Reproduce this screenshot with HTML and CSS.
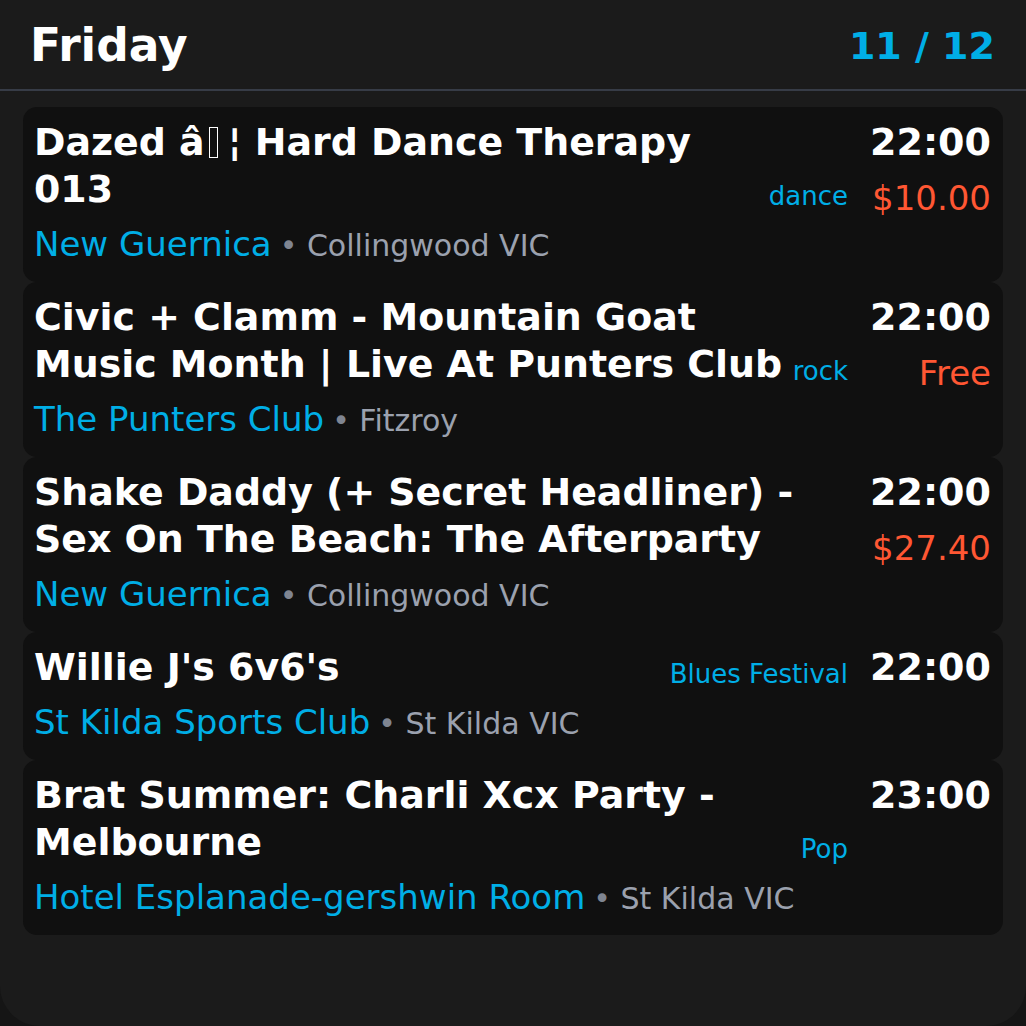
FILE: index.html
```html
<!DOCTYPE html>
<html lang="en">
<head>
<meta charset="utf-8">
<title>Friday</title>
<link rel="stylesheet" href="styles.css">
</head>
<body>
<div class="screen">
  <header class="header">
    <h1 class="day">Friday</h1>
    <div class="page">11 / 12</div>
  </header>
  <div class="list">
    <div class="card">
      <div class="main">
        <div class="top">
          <div class="title">Dazed â<span class="ctl"></span>¦ Hard Dance Therapy 013</div>
          <div class="genre">dance</div>
        </div>
        <div class="venue"><span class="vname">New Guernica</span><span class="loc"><span class="dot">•</span> Collingwood VIC</span></div>
      </div>
      <div class="side">
        <div class="time">22:00</div>
        <div class="price">$10.00</div>
      </div>
    </div>
    <div class="card">
      <div class="main">
        <div class="top">
          <div class="title">Civic + Clamm - Mountain Goat Music Month | Live At Punters Club</div>
          <div class="genre">rock</div>
        </div>
        <div class="venue"><span class="vname">The Punters Club</span><span class="loc"><span class="dot">•</span> Fitzroy</span></div>
      </div>
      <div class="side">
        <div class="time">22:00</div>
        <div class="price">Free</div>
      </div>
    </div>
    <div class="card">
      <div class="main">
        <div class="top">
          <div class="title">Shake Daddy (+ Secret Headliner) - Sex On The Beach: The Afterparty</div>
        </div>
        <div class="venue"><span class="vname">New Guernica</span><span class="loc"><span class="dot">•</span> Collingwood VIC</span></div>
      </div>
      <div class="side">
        <div class="time">22:00</div>
        <div class="price">$27.40</div>
      </div>
    </div>
    <div class="card">
      <div class="main">
        <div class="top">
          <div class="title">Willie J's 6v6's</div>
          <div class="genre">Blues Festival</div>
        </div>
        <div class="venue"><span class="vname">St Kilda Sports Club</span><span class="loc"><span class="dot">•</span> St Kilda VIC</span></div>
      </div>
      <div class="side">
        <div class="time">22:00</div>
      </div>
    </div>
    <div class="card">
      <div class="main">
        <div class="top">
          <div class="title">Brat Summer: Charli Xcx Party - Melbourne</div>
          <div class="genre">Pop</div>
        </div>
        <div class="venue"><span class="vname">Hotel Esplanade-gershwin Room</span><span class="loc"><span class="dot">•</span> St Kilda VIC</span></div>
      </div>
      <div class="side">
        <div class="time">23:00</div>
      </div>
    </div>
  </div>
</div>
</body>
</html>
```

FILE: styles.css
```css
html, body {
  margin: 0;
  padding: 0;
  background: #151515;
}
body {
  font-family: "DejaVu Sans", sans-serif;
  color: #ffffff;
}
.screen {
  width: 1026px;
  height: 1026px;
  box-sizing: border-box;
  background: #1b1b1b;
  border-radius: 0 0 40px 40px;
  overflow: hidden;
}
.header {
  display: flex;
  justify-content: space-between;
  align-items: center;
  padding: 0 31px 0 30px;
  border-bottom: 2px solid #373c47;
  box-sizing: border-box;
  height: 91px;
}
.day {
  margin: 0;
  font-size: 45.5px;
  font-weight: bold;
  line-height: 1;
  margin-top: 2px;
}
.page {
  font-size: 38px;
  font-weight: bold;
  color: #00aee6;
  line-height: 1;
  margin-top: 2px;
}
.list {
  display: flex;
  flex-direction: column;
  padding: 16px 23px 0 23px;
}
.card {
  display: flex;
  background: #101010;
  border-radius: 14px;
  padding: 12px 12px 15px 11px;
  gap: 22px;
}
.main {
  flex: 1;
  min-width: 0;
}
.top {
  display: flex;
  align-items: flex-end;
  gap: 8px;
}
.title {
  flex: 1;
  font-size: 37.9px;
  font-weight: bold;
  line-height: 47px;
}
.ctl {
  display: inline-block;
  box-sizing: border-box;
  width: 9px;
  height: 31px;
  border: 1.5px solid #ffffff;
  margin: 0 10px 0 4px;
  vertical-align: -3px;
}
.genre {
  font-size: 26px;
  color: #00aee6;
  line-height: 33px;
  white-space: nowrap;
}
.venue {
  margin-top: 10px;
  font-size: 34px;
  line-height: 42px;
}
.vname {
  color: #00aee6;
}
.loc {
  font-size: 30px;
  color: #9ba1ae;
}
.dot {
  color: #7f8591;
  margin-left: 8px;
}
.side {
  display: flex;
  flex-direction: column;
  align-items: flex-end;
}
.time {
  font-size: 38px;
  font-weight: bold;
  line-height: 47px;
}
.price {
  margin-top: 9px;
  font-size: 34px;
  color: #ff5733;
  line-height: 47px;
}
```
